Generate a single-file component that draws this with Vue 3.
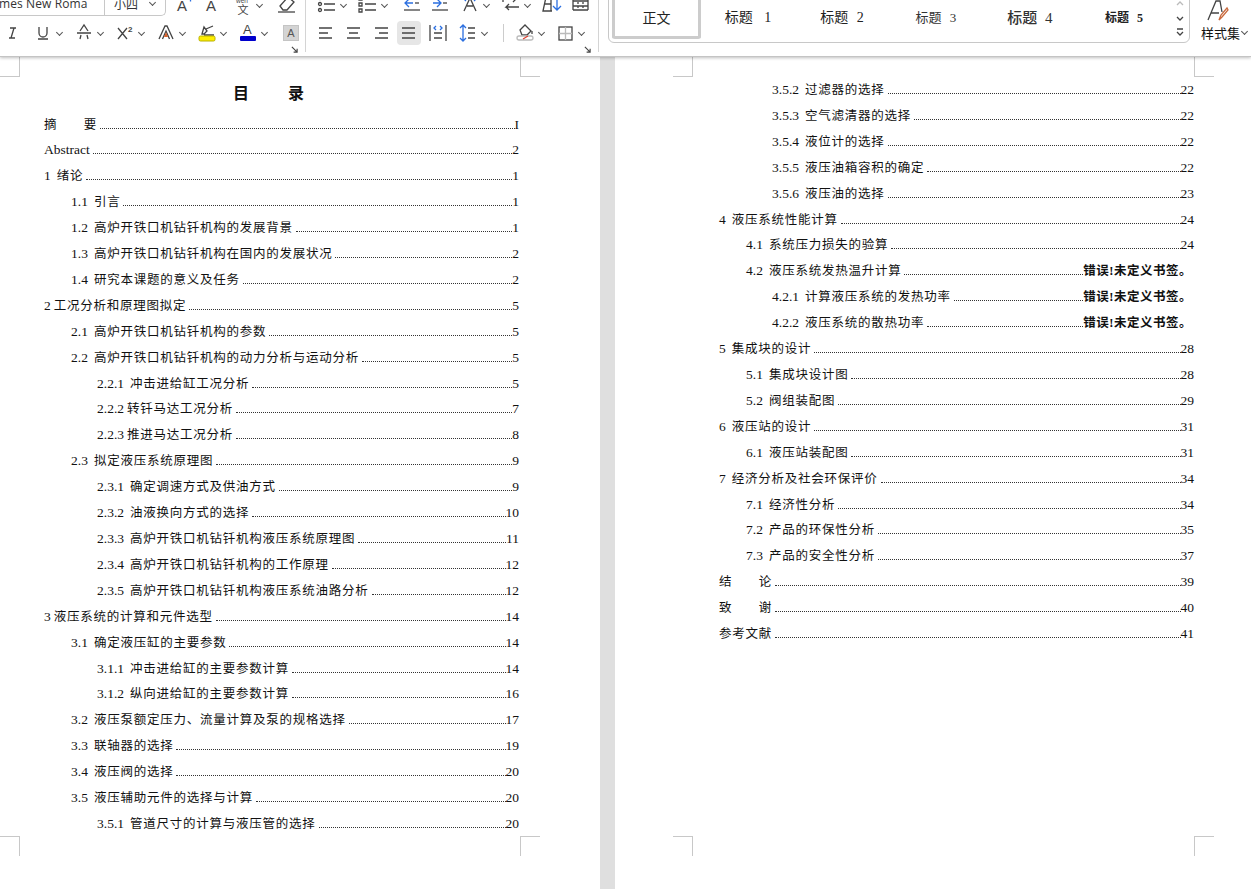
<script setup>
// 目录 데이터: l = 들여쓰기 단계, n = 번호, t = 제목, p = 페이지, tight = 번호 뒤 간격 좁음, err = 오류 표시
const leftRows = [
  { l: 0, n: '', t: '摘　　要', p: 'I' },
  { l: 0, n: '', t: 'Abstract', p: '2', latin: true },
  { l: 0, n: '1', t: '绪论', p: '1' },
  { l: 1, n: '1.1', t: '引言', p: '1' },
  { l: 1, n: '1.2', t: '高炉开铁口机钻钎机构的发展背景', p: '1' },
  { l: 1, n: '1.3', t: '高炉开铁口机钻钎机构在国内的发展状况', p: '2' },
  { l: 1, n: '1.4', t: '研究本课题的意义及任务', p: '2' },
  { l: 0, n: '2', t: '工况分析和原理图拟定', p: '5', tight: true },
  { l: 1, n: '2.1', t: '高炉开铁口机钻钎机构的参数', p: '5' },
  { l: 1, n: '2.2', t: '高炉开铁口机钻钎机构的动力分析与运动分析', p: '5' },
  { l: 2, n: '2.2.1', t: '冲击进给缸工况分析', p: '5' },
  { l: 2, n: '2.2.2', t: '转钎马达工况分析', p: '7', tight: true },
  { l: 2, n: '2.2.3', t: '推进马达工况分析', p: '8', tight: true },
  { l: 1, n: '2.3', t: '拟定液压系统原理图', p: '9' },
  { l: 2, n: '2.3.1', t: '确定调速方式及供油方式', p: '9' },
  { l: 2, n: '2.3.2', t: '油液换向方式的选择', p: '10' },
  { l: 2, n: '2.3.3', t: '高炉开铁口机钻钎机构液压系统原理图', p: '11' },
  { l: 2, n: '2.3.4', t: '高炉开铁口机钻钎机构的工作原理', p: '12' },
  { l: 2, n: '2.3.5', t: '高炉开铁口机钻钎机构液压系统油路分析', p: '12' },
  { l: 0, n: '3', t: '液压系统的计算和元件选型', p: '14', tight: true },
  { l: 1, n: '3.1', t: '确定液压缸的主要参数', p: '14' },
  { l: 2, n: '3.1.1', t: '冲击进给缸的主要参数计算', p: '14' },
  { l: 2, n: '3.1.2', t: '纵向进给缸的主要参数计算', p: '16' },
  { l: 1, n: '3.2', t: '液压泵额定压力、流量计算及泵的规格选择', p: '17' },
  { l: 1, n: '3.3', t: '联轴器的选择', p: '19' },
  { l: 1, n: '3.4', t: '液压阀的选择', p: '20' },
  { l: 1, n: '3.5', t: '液压辅助元件的选择与计算', p: '20' },
  { l: 2, n: '3.5.1', t: '管道尺寸的计算与液压管的选择', p: '20' },
]

const rightRows = [
  { l: 2, n: '3.5.2', t: '过滤器的选择', p: '22' },
  { l: 2, n: '3.5.3', t: '空气滤清器的选择', p: '22' },
  { l: 2, n: '3.5.4', t: '液位计的选择', p: '22' },
  { l: 2, n: '3.5.5', t: '液压油箱容积的确定', p: '22' },
  { l: 2, n: '3.5.6', t: '液压油的选择', p: '23' },
  { l: 0, n: '4', t: '液压系统性能计算', p: '24' },
  { l: 1, n: '4.1', t: '系统压力损失的验算', p: '24' },
  { l: 1, n: '4.2', t: '液压系统发热温升计算', p: '错误!未定义书签。', err: true },
  { l: 2, n: '4.2.1', t: '计算液压系统的发热功率', p: '错误!未定义书签。', err: true },
  { l: 2, n: '4.2.2', t: '液压系统的散热功率', p: '错误!未定义书签。', err: true },
  { l: 0, n: '5', t: '集成块的设计', p: '28' },
  { l: 1, n: '5.1', t: '集成块设计图', p: '28' },
  { l: 1, n: '5.2', t: '阀组装配图', p: '29' },
  { l: 0, n: '6', t: '液压站的设计', p: '31' },
  { l: 1, n: '6.1', t: '液压站装配图', p: '31' },
  { l: 0, n: '7', t: '经济分析及社会环保评价', p: '34' },
  { l: 1, n: '7.1', t: '经济性分析', p: '34' },
  { l: 1, n: '7.2', t: '产品的环保性分析', p: '35' },
  { l: 1, n: '7.3', t: '产品的安全性分析', p: '37' },
  { l: 0, n: '', t: '结　　论', p: '39' },
  { l: 0, n: '', t: '致　　谢', p: '40' },
  { l: 0, n: '', t: '参考文献', p: '41' },
]

const styles = [
  { label: '标题 1', cls: 's1' },
  { label: '标题 2', cls: 's2' },
  { label: '标题 3', cls: 's3' },
  { label: '标题 4', cls: 's4' },
  { label: '标题 5', cls: 's5' },
]
</script>

<template>
  <div class="app">
    <header class="ribbon">
      <section class="group font-group">
        <div class="row row-top">
          <div class="select font-select"><span class="select-text">Times New Roma</span><i class="caret"></i></div>
          <div class="select size-select"><span class="select-text">小四</span><i class="caret"></i></div>
          <svg class="tool ml6" viewBox="0 0 24 24"><text x="5" y="18" class="ic-a">A</text><path d="M15 5h7M18.500 1.500v7" class="blue" /></svg>
          <svg class="tool ml3" viewBox="0 0 24 24"><text x="7" y="18" class="ic-a">A</text></svg>
          <svg class="tool ml8" viewBox="0 0 24 24"><text x="5" y="10" class="ic-wen">wen</text><text x="6.500" y="21" class="ic-wen2">文</text></svg>
          <i class="caret"></i>
          <svg class="tool ml10" viewBox="0 0 24 24"><path d="M6 13l8-9 6 5-7 8H9z" class="line" /><path d="M4 19h17" class="line" /></svg>
        </div>
        <div class="row">
          <svg class="tool" viewBox="0 0 24 24"><path d="M9 17h6M11 17l3-10M10 7h6" class="line" /></svg>
          <svg class="tool ml7" viewBox="0 0 24 24"><path d="M8 6v6a4 4 0 0 0 8 0V6M7 18h10" class="line" /></svg>
          <i class="caret"></i>
          <svg class="tool ml8" viewBox="0 0 24 24"><path d="M8 10l4-6 4 6M5 12h14M8 18l1-4M16 18l-1-4" class="line" /></svg>
          <i class="caret"></i>
          <svg class="tool ml8" viewBox="0 0 24 24"><path d="M5 7l9 11M14 7L5 18" class="line" /><text x="15" y="11" class="ic-sup">2</text></svg>
          <i class="caret"></i>
          <svg class="tool ml8" viewBox="0 0 24 24"><path d="M5 18L11 5h2l6 13M8.500 18l3.500-8 3.500 8" class="line" /><path d="M10 16h4l-2-5z" class="orange-fill" /></svg>
          <i class="caret"></i>
          <svg class="tool ml8" viewBox="0 0 24 24"><path d="M7 13l2-7 3 4-3 3zM11 8l7-3M9 14h10" class="line" /><rect x="4" y="15" width="16" height="5" rx="1.500" class="yellow" /></svg>
          <i class="caret"></i>
          <svg class="tool ml8" viewBox="0 0 24 24"><text x="7" y="13" class="ic-a-s">A</text><rect x="4" y="15" width="16" height="5" rx="1" class="navy" /></svg>
          <i class="caret"></i>
          <div class="shaded">A</div>
        </div>
        <svg class="launcher" viewBox="0 0 8 8"><path d="M1 1l6 6M7 3v4H3" class="line" /></svg>
      </section>

      <section class="group para-group">
        <div class="row row-top">
          <svg class="tool ml9" viewBox="0 0 24 24"><path d="M9 5h11M9 11h11M9 17h11" class="line" /><circle cx="5" cy="5" r="1.500" class="line" /><circle cx="5" cy="11" r="1.500" class="line" /><circle cx="5" cy="17" r="1.500" class="line" /></svg>
          <i class="caret"></i>
          <svg class="tool ml8" viewBox="0 0 24 24"><path d="M9 5h11M9 11h11M9 17h11M3 4h3v3H3zM3 10h3v3H3zM3 16h3v3H3z" class="line" /></svg>
          <i class="caret"></i>
          <svg class="tool ml11" viewBox="0 0 24 24"><path d="M9 6L5 10l4 4M5 10h8" class="blue-line" /><path d="M15 10h4" class="line" /><path d="M4 17h16" class="line" /></svg>
          <svg class="tool ml4" viewBox="0 0 24 24"><path d="M9 6l4 4-4 4M13 10H5" class="blue-line" /><path d="M15 10h4" class="line" /><path d="M4 17h16" class="line" /></svg>
          <svg class="tool ml6" viewBox="0 0 24 24"><path d="M6 18l6-13 6 13M9 13h6" class="line" /><path d="M5 5l3-3M19 5l-3-3M5 5l3 3M19 5l-3 3M5 5h4M15 5h4" class="blue-line" /></svg>
          <i class="caret"></i>
          <svg class="tool ml8" viewBox="0 0 24 24"><path d="M4 6h13l-3-3M17 6l-3 3M4 6v3M20 14H7l3-3M7 14l3 3" class="line" /></svg>
          <i class="caret"></i>
          <svg class="tool ml8" viewBox="0 0 24 24"><path d="M3 18L6 4h5v14zM4 11h7M3 18h9" class="line" /><path d="M17 3v14M13 13l4 4 4-4" class="blue-line" /></svg>
          <svg class="tool ml5" viewBox="0 0 24 24"><path d="M4 17h15M4 5v12M19 5v12M4 8h15M4 13h15" class="line" /><path d="M9 5v12M14 5v12" class="dash-line" /></svg>
        </div>
        <div class="row">
          <svg class="tool ml7" viewBox="0 0 24 24"><path d="M6 7h13M6 12h9M6 17h13" class="line" /></svg>
          <svg class="tool ml4" viewBox="0 0 24 24"><path d="M6 7h13M8 12h9M6 17h13" class="line" /></svg>
          <svg class="tool ml4" viewBox="0 0 24 24"><path d="M6 7h13M10 12h9M6 17h13" class="line" /></svg>
          <svg class="tool ml4 active" viewBox="0 0 24 24"><path d="M5 7h13M5 12h13M5 17h13" class="line" /></svg>
          <svg class="tool ml5" viewBox="0 0 24 24"><path d="M4 4v16M20 4v16M8 12h8M8 17h8" class="line" /><path d="M10 5L8 7l2 2M14 5l2 2-2 2" class="blue-line" /></svg>
          <svg class="tool ml6" viewBox="0 0 24 24"><path d="M7 4v16M4 7l3-3 3 3M4 17l3 3 3-3" class="blue-line" /><path d="M12 7h7M12 12h7M12 17h7" class="line" /></svg>
          <i class="caret"></i>
          <span class="v-sep"></span>
          <svg class="tool ml9" viewBox="0 0 24 24"><path d="M7 9l5-5 6 6-4 4H9z" class="line" /><path d="M19 10v3" class="line" /><rect x="4" y="15" width="16" height="4" rx="2" class="faint-line" /><path d="M10 18l5-3" class="red-line" /></svg>
          <i class="caret"></i>
          <svg class="tool ml7" viewBox="0 0 24 24"><rect x="6" y="6" width="13" height="13" class="line" /><path d="M12.500 6v13M6 12.500h13" class="faint-line" /></svg>
          <i class="caret"></i>
        </div>
        <svg class="launcher" viewBox="0 0 8 8"><path d="M1 1l6 6M7 3v4H3" class="line" /></svg>
      </section>

      <section class="gallery">
        <div class="style-card">正文</div>
        <div v-for="s in styles" :key="s.label" class="style-item" :class="s.cls">{{ s.label }}</div>
        <div class="scroll-col">
          <svg class="arrow" viewBox="0 0 10 8"><path d="M2 5l3-3 3 3" class="faint-line" /></svg>
          <svg class="arrow" viewBox="0 0 10 8"><path d="M2 3l3 3 3-3" class="line" /></svg>
          <svg class="arrow" viewBox="0 0 10 8"><path d="M2 1h6M2 4l3 3 3-3" class="line" /></svg>
        </div>
      </section>

      <section class="style-set">
        <svg class="style-icon" viewBox="0 0 24 24"><path d="M3 22L11 3h4l2 11M6 15h8" class="line" /><path d="M14 22l2-5 6-7 1 2-6 7z" class="orange-line" /></svg>
        <div class="style-label">样式集<i class="caret"></i></div>
      </section>
    </header>

    <main class="workspace">
      <article class="page page-left">
        <i class="mark tl"></i><i class="mark tr"></i><i class="mark bl"></i><i class="mark br"></i>
        <h1 class="toc-title"><span>目</span><span>录</span></h1>
        <div v-for="r in leftRows" :key="r.t" class="toc-row" :class="'lv' + r.l">
          <span v-if="r.n" class="num" :class="{ tight: r.tight }">{{ r.n }}</span>
          <span :class="r.latin ? 'latin' : 'label'">{{ r.t }}</span>
          <span class="leader"></span>
          <span class="pg">{{ r.p }}</span>
        </div>
      </article>
      <div class="divider"></div>
      <article class="page page-right">
        <i class="mark tl"></i><i class="mark tr"></i><i class="mark bl"></i><i class="mark br"></i>
        <div v-for="r in rightRows" :key="r.t" class="toc-row" :class="'lv' + r.l">
          <span v-if="r.n" class="num" :class="{ tight: r.tight }">{{ r.n }}</span>
          <span class="label">{{ r.t }}</span>
          <span class="leader"></span>
          <span :class="r.err ? 'pg-err' : 'pg'">{{ r.p }}</span>
        </div>
      </article>
    </main>
  </div>
</template>

<style>
html,
body {
  margin: 0;
  background: #fff;
}
</style>

<style scoped>
.app {
  width: 1251px;
  height: 889px;
  overflow: hidden;
  font-family: "Liberation Serif", "Noto Sans CJK SC", serif;
  color: #111;
  background: #fff;
}

.ribbon {
  position: relative;
  z-index: 2;
  display: flex;
  height: 57px;
  overflow: hidden;
  background: #fff;
  border-bottom: 1px solid #c4c4c4;
  box-sizing: border-box;
  box-shadow: 0 1px 3px rgba(0, 0, 0, 0.25);
}

.group {
  position: relative;
  flex: none;
  height: 52px;
  border-right: 1px solid #d4d4d4;
  box-sizing: border-box;
}

.font-group {
  width: 306px;
}

.para-group {
  width: 293px;
}

.row {
  display: flex;
  align-items: center;
  height: 26px;
  margin-top: 2px;
}

.row-top {
  height: 26px;
  margin-top: -8px;
}

.tool {
  flex: none;
  width: 24px;
  height: 24px;
}

.caret {
  flex: none;
  display: block;
  width: 4px;
  height: 4px;
  margin: 0 2px 2px;
  border-right: 1.500px solid #555;
  border-bottom: 1.500px solid #555;
  transform: rotate(45deg);
}

.ml3 { margin-left: 3px; }
.ml4 { margin-left: 4px; }
.ml5 { margin-left: 5px; }
.ml6 { margin-left: 6px; }
.ml7 { margin-left: 7px; }
.ml8 { margin-left: 8px; }
.ml9 { margin-left: 9px; }
.ml10 { margin-left: 10px; }
.ml11 { margin-left: 11px; }

.select {
  flex: none;
  display: flex;
  align-items: center;
  justify-content: space-between;
  height: 24px;
  margin-top: -2px;
  padding-right: 8px;
  border: 1px solid #c8c8c8;
  border-top: 0;
  box-sizing: border-box;
  overflow: hidden;
  font-family: "Open Sans", "Noto Sans CJK SC", sans-serif;
  font-size: 12px;
  color: #333;
}

.font-select {
  width: 105px;
  border-left: 0;
  direction: rtl;
}

.font-select .select-text {
  direction: ltr;
  white-space: nowrap;
  margin-right: 8.500px;
  letter-spacing: 0.100px;
}

.font-select .caret {
  margin-right: 0;
}

.size-select {
  width: 61px;
  margin-left: 0;
  padding-left: 9px;
  border-left: 0;
  border-radius: 0 0 5px 0;
}

.line,
.blue-line,
.faint-line,
.orange-line,
.red-line,
.dash-line {
  fill: none;
  stroke: #444;
  stroke-width: 1.300;
}

.blue,
.blue-line {
  fill: none;
  stroke: #2b6fe0;
  stroke-width: 1.300;
}

.dash-line {
  stroke-dasharray: 2 2;
}

.faint-line {
  stroke: #bbb;
}

.orange-line {
  stroke: #c8693c;
}

.red-line {
  stroke: #e04030;
}

.orange-fill {
  fill: #d9622b;
}

.yellow {
  fill: #ffee00;
  stroke: #b8b000;
}

.navy {
  fill: #0000cc;
}

.ic-a {
  font-family: "Liberation Sans", sans-serif;
  font-size: 15px;
  fill: #444;
}

.ic-a-s {
  font-family: "Liberation Sans", sans-serif;
  font-size: 13px;
  fill: #444;
}

.ic-wen {
  font-family: "Liberation Sans", sans-serif;
  font-size: 6.500px;
  fill: #444;
}

.ic-wen2 {
  font-family: "Noto Sans CJK SC", sans-serif;
  font-size: 11px;
  fill: #444;
}

.ic-sup {
  font-family: "Liberation Sans", sans-serif;
  font-size: 8px;
  font-weight: 700;
  fill: #444;
}

.shaded {
  flex: none;
  width: 16px;
  height: 16px;
  margin-left: 14px;
  background: #d4d4d4;
  border: 1px solid #c4c4c4;
  box-sizing: border-box;
  text-align: center;
  font-family: "Liberation Sans", sans-serif;
  font-size: 11px;
  line-height: 14px;
  color: #555;
}

.active {
  background: #e6e6e6;
  border-radius: 4px;
}

.v-sep {
  flex: none;
  width: 1px;
  height: 18px;
  margin-left: 14px;
  background: #ccc;
}

.launcher {
  position: absolute;
  right: 7px;
  bottom: -1px;
  width: 7px;
  height: 7px;
}

.gallery {
  flex: none;
  display: flex;
  align-items: stretch;
  width: 582px;
  height: 53px;
  margin: -10px 0 0 9px;
  padding: 0 0 2px 3px;
  border: 1px solid #c8c8c8;
  border-radius: 6px;
  box-sizing: border-box;
  color: #222;
}

.style-card {
  flex: none;
  width: 89px;
  border: 3px solid #ccc;
  border-top: 0;
  border-radius: 3px;
  box-sizing: border-box;
  padding-top: 17px;
  margin-bottom: 1px;
  text-align: center;
  font-size: 14px;
  line-height: 22px;
}

.style-item {
  flex: none;
  width: 94px;
  padding-top: 15px;
  text-align: center;
  line-height: 24px;
  white-space: pre;
}

.s1 { font-size: 14px; word-spacing: 8px; }
.s2 { font-size: 14px; word-spacing: 5px; }
.s3 { font-size: 13px; word-spacing: 5px; color: #333; }
.s4 { font-size: 15px; word-spacing: 4px; font-weight: 500; color: #333; }
.s5 { font-size: 12px; word-spacing: 5px; font-weight: 700; }

.scroll-col {
  flex: 1;
  display: flex;
  flex-direction: column;
  align-items: center;
  padding-top: 9px;
  gap: 6px;
}

.arrow {
  width: 10px;
  height: 8px;
}

.style-set {
  flex: none;
  width: 50px;
  margin-left: 11px;
  text-align: center;
}

.style-icon {
  display: block;
  width: 24px;
  height: 24px;
  margin: -2px auto 0 4px;
}

.style-label {
  display: flex;
  align-items: center;
  margin-top: 1px;
  font-size: 13px;
  white-space: nowrap;
}

.workspace {
  display: flex;
  height: 832px;
}

.page {
  position: relative;
  flex: none;
  height: 832px;
  box-sizing: border-box;
  background: #fff;
}

.page-left {
  width: 600px;
  padding: 24.500px 81px 0 44px;
}

.page-right {
  width: 636px;
  padding: 20px 57px 0 104px;
}

.divider {
  flex: none;
  width: 15px;
  background: #dfdfdf;
}

.mark {
  position: absolute;
  width: 20px;
  height: 20px;
  box-sizing: border-box;
  border: 0 solid #c8c8c8;
}

.page-left .tl { left: 0; top: 0; border-width: 0 1px 1px 0; width: 20px; }
.page-left .tr { left: 520px; top: 0; border-width: 0 0 1px 1px; }
.page-left .bl { left: 0; top: 779px; border-width: 1px 1px 0 0; }
.page-left .br { left: 520px; top: 779px; border-width: 1px 0 0 1px; }
.page-right .tl { left: 58px; top: 0; border-width: 0 1px 1px 0; }
.page-right .tr { left: 579px; top: 0; border-width: 0 0 1px 1px; }
.page-right .bl { left: 58px; top: 779px; border-width: 1px 1px 0 0; }
.page-right .br { left: 579px; top: 779px; border-width: 1px 0 0 1px; }

.toc-title {
  display: flex;
  justify-content: center;
  gap: 39px;
  height: 24px;
  margin: 0 0 6px;
  padding-right: 26px;
  font-size: 16px;
  font-weight: 700;
  line-height: 24px;
}

.toc-row {
  display: flex;
  align-items: baseline;
  height: 25.920px;
  line-height: 25.920px;
  font-size: 12.500px;
  white-space: nowrap;
}

.lv1 { padding-left: 27px; }
.lv2 { padding-left: 53px; }

.num {
  font-size: 13.500px;
  margin-right: 6px;
}

.num.tight {
  margin-right: 3px;
}

.label {
  letter-spacing: 0.750px;
}

.latin {
  font-size: 13.500px;
}

.leader {
  flex: 1;
  min-width: 0;
  margin: 0 0 0 3px;
  border-bottom: 1px dotted #333;
}

.pg {
  font-size: 13.500px;
}

.pg-err {
  margin-right: 2px;
  font-size: 12.500px;
  font-weight: 700;
  letter-spacing: 0.500px;
}
</style>
